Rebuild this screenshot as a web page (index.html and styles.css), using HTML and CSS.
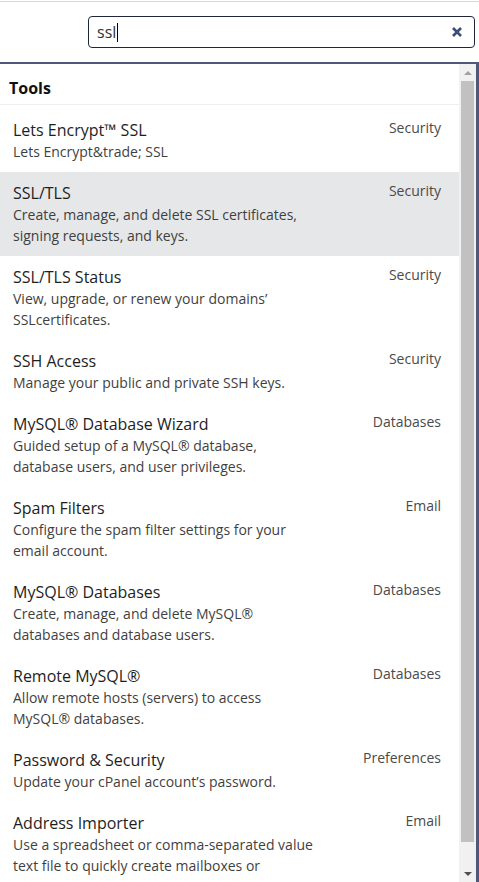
FILE: index.html
```html
<!DOCTYPE html>
<html>
<head>
<meta charset="utf-8">
<link rel="stylesheet" href="styles.css">
</head>
<body>
<div class="top">
  <div class="search">
    <span class="query">ssl</span><span class="caret"></span>
    <svg class="clear" width="12" height="12" viewBox="0 0 12 12"><path d="M2 2 L10 10 M10 2 L2 10" stroke="#3b4d78" stroke-width="2.6" stroke-linecap="butt"/></svg>
  </div>
</div>
<div class="panel">
  <div class="list">
    <div class="head">Tools</div>
    <div class="items">
      <div class="item">
        <div class="info"><div class="title">Lets Encrypt™ SSL</div><div class="desc">Lets Encrypt&amp;trade; SSL</div></div>
        <div class="cat">Security</div>
      </div>
      <div class="item active">
        <div class="info"><div class="title">SSL/TLS</div><div class="desc">Create, manage, and delete SSL certificates, signing requests, and keys.</div></div>
        <div class="cat">Security</div>
      </div>
      <div class="item">
        <div class="info"><div class="title">SSL/TLS Status</div><div class="desc">View, upgrade, or renew your domains’ SSLcertificates.</div></div>
        <div class="cat">Security</div>
      </div>
      <div class="item">
        <div class="info"><div class="title">SSH Access</div><div class="desc">Manage your public and private SSH keys.</div></div>
        <div class="cat">Security</div>
      </div>
      <div class="item">
        <div class="info"><div class="title">MySQL® Database Wizard</div><div class="desc">Guided setup of a MySQL® database, database users, and user privileges.</div></div>
        <div class="cat">Databases</div>
      </div>
      <div class="item">
        <div class="info"><div class="title">Spam Filters</div><div class="desc">Configure the spam filter settings for your email account.</div></div>
        <div class="cat">Email</div>
      </div>
      <div class="item">
        <div class="info"><div class="title">MySQL® Databases</div><div class="desc">Create, manage, and delete MySQL® databases and database users.</div></div>
        <div class="cat">Databases</div>
      </div>
      <div class="item">
        <div class="info"><div class="title">Remote MySQL®</div><div class="desc">Allow remote hosts (servers) to access MySQL® databases.</div></div>
        <div class="cat">Databases</div>
      </div>
      <div class="item">
        <div class="info"><div class="title">Password &amp; Security</div><div class="desc">Update your cPanel account’s password.</div></div>
        <div class="cat">Preferences</div>
      </div>
      <div class="item">
        <div class="info"><div class="title">Address Importer</div><div class="desc">Use a spreadsheet or comma-separated value text file to quickly create mailboxes or</div></div>
        <div class="cat">Email</div>
      </div>
    </div>
  </div>
  <div class="scrollbar">
    <div class="btn"><span class="arrow-up"></span></div>
    <div class="track"><div class="thumb"></div></div>
    <div class="btn"><span class="arrow-down"></span></div>
  </div>
</div>
</body>
</html>
```
FILE: styles.css
```css
html, body {
  margin: 0;
  padding: 0;
  background: #fff;
  font-family: "Open Sans", "DejaVu Sans", sans-serif;
  height: 882px;
  overflow: hidden;
}
.top {
  margin-top: 1px;
  border-top: 1px solid #d6d6d6;
  padding: 14px 4px 14px 88px;
}
.search {
  height: 30px;
  border: 1px solid #1f2638;
  border-radius: 4px;
  display: flex;
  align-items: center;
  padding: 0 11px 0 8px;
}
.query {
  font-size: 16px;
  color: #333;
  line-height: 22px;
}
.caret {
  width: 1px;
  height: 19px;
  background: #000;
  margin-left: 1px;
}
.clear {
  margin-left: auto;
}
.panel {
  height: 818px;
  border-top: 2px solid #50587a;
  border-right: 3px solid #50587a;
  display: flex;
  overflow: hidden;
}
.list {
  flex: 1;
  min-width: 0;
}
.head {
  font-weight: bold;
  font-size: 16px;
  line-height: 22px;
  color: #111;
  padding: 13px 9px 5px;
  border-bottom: 1px solid #eeeeee;
}
.items {
  padding-top: 4px;
}
.item {
  display: flex;
  justify-content: space-between;
  padding: 10px 18px 10px 13px;
}
.item.active {
  background: #e6e7e9;
}
.title {
  font-size: 16px;
  line-height: 22px;
  color: #1e1e1e;
}
.desc {
  font-size: 14px;
  line-height: 21px;
  color: #3f3f3f;
  max-width: 305px;
}
.cat {
  font-size: 14px;
  line-height: 21px;
  color: #4a4a4a;
  margin-top: -2px;
  white-space: nowrap;
}
.scrollbar {
  width: 17px;
  background: #f1f1f1;
  display: flex;
  flex-direction: column;
}
.btn {
  height: 17px;
  display: flex;
  align-items: center;
  justify-content: center;
}
.track {
  flex: 1;
  display: flex;
  flex-direction: column;
  padding-bottom: 23px;
}
.thumb {
  flex: 1;
  margin: 0 2px;
  background: #c1c1c1;
}
.arrow-up {
  width: 0;
  height: 0;
  border-left: 4px solid transparent;
  border-right: 4px solid transparent;
  border-bottom: 4px solid #a3a3a3;
}
.arrow-down {
  width: 0;
  height: 0;
  border-left: 4px solid transparent;
  border-right: 4px solid transparent;
  border-top: 4px solid #505050;
}
```
